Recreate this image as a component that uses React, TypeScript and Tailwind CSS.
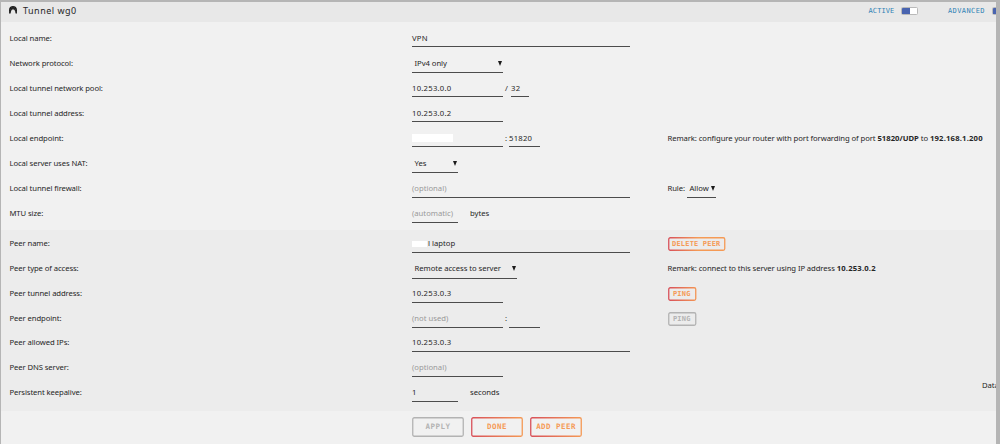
import type { ReactNode } from 'react'
import clsx from 'clsx'

function Row({ label, children, extra, peer }: { label: string; children: ReactNode; extra?: ReactNode; peer?: boolean }) {
  return (
    <div className={clsx('grid grid-cols-[402.5px_255.5px_1fr] pl-[8.5px] whitespace-nowrap', peer ? 'h-[24.85px]' : 'h-[25.1px]')}>
      <div className="pt-(--pad) tracking-[-0.1px]">{label}</div>
      <div className="flex">{children}</div>
      <div className="flex pt-(--pad) tracking-[-0.09px]">{extra}</div>
    </div>
  )
}

function Field({ className, hint, children }: { className: string; hint?: boolean; children?: ReactNode }) {
  return (
    <div className={clsx('flex h-[25px] shrink-0 border-b border-[#4c4c4c] pt-(--pad)', hint ? 'text-[#999]' : 'tracking-[0.25px]', className)}>
      {children}
    </div>
  )
}

function Select({ className, children }: { className: string; children: ReactNode }) {
  return (
    <div className={clsx('flex h-[25.6px] shrink-0 justify-between border-b border-[#4c4c4c] pt-(--pad) pl-[2.5px] tracking-[-0.05px]', className)}>
      <span>{children}</span>
      <svg className="mt-[3px] mr-px h-[5px] w-[4px]" viewBox="0 0 4 5">
        <path d="M0 0h4L2 5z" fill="#1c1b1b" />
      </svg>
    </div>
  )
}

function Button({ id, className, disabled, large, children }: { id: string; className: string; disabled?: boolean; large?: boolean; children: ReactNode }) {
  return (
    <button className={clsx("relative shrink-0 font-['DejaVu_Sans_Mono',monospace] font-bold", disabled ? 'text-[#b3b3b3]' : 'text-[#f59a55]', large ? 'h-[20px] text-[7.5px] tracking-[0.45px]' : 'h-[14px] text-[7px] tracking-[0.2px]', className)}>
      <svg className="absolute inset-0 h-full w-full overflow-visible">
        <defs>
          <linearGradient id={id} gradientUnits="userSpaceOnUse" x1="0" y1="0" x2={large ? 52 : 30} y2="0">
            <stop stopColor={disabled ? '#b3b3b3' : '#d8505a'} />
            <stop offset="1" stopColor={disabled ? '#b3b3b3' : '#f59a55'} />
          </linearGradient>
        </defs>
        <rect x="0.75" y="0.75" rx="1.5" style={{ width: 'calc(100% - 1.5px)', height: 'calc(100% - 1.5px)' }} fill="none" stroke={`url(#${id})`} strokeWidth="1.3" />
      </svg>
      <span className={clsx('relative block text-center', large ? 'leading-[20px]' : 'leading-[14px]')}>{children}</span>
    </button>
  )
}

function Toggle() {
  return (
    <span className="flex h-[8px] w-[17px] shrink-0 overflow-hidden rounded-[1.5px] border border-[#b9b9b9] bg-white">
      <span className="-my-px -ml-px w-[9px] shrink-0 bg-[#4964b0]" />
    </span>
  )
}

export default function App() {
  return (
    <div className="h-[444px] w-[1000px] overflow-hidden border-t-2 border-r-4 border-l border-[#b5b5b5] bg-[#f1f1f1] font-['Noto_Sans',sans-serif] text-[7.7px] leading-[11px] text-[#262626]">
      <header className="flex h-[20px] items-center overflow-hidden bg-[#e8e8e8] pl-[8px] whitespace-nowrap">
        <svg className="mt-[-4px] h-[8px] w-[8px]" viewBox="0 0 8 8">
          <path d="M0 7.5V4C0 1.5 1.7 0 4 0s4 1.5 4 4v3.5H6.6L6 4.8 5 3.6H3L2.2 4.8 1.6 7.5z" fill="#1e1e1e" />
          <path d="M0 6h1.8M.5 3l2 1.2M2.5.7l.8 2M5.5.7l-.8 2M7.5 3l-2 1.2M8 6H6.2" stroke="#777" strokeWidth=".3" />
        </svg>
        <h1 className="-mt-[2px] ml-[6px] text-[9px] leading-[12px] tracking-[0.5px]">Tunnel wg0</h1>
        <div className="-mt-[2px] ml-auto flex shrink-0 items-center font-['DejaVu_Sans_Mono',monospace] text-[7px] text-[#3284b6]">
          <span className="mr-[6.5px] tracking-[0.1px]">ACTIVE</span>
          <Toggle />
          <span className="mr-[7px] ml-[30px] tracking-[0.42px]">ADVANCED</span>
          <div className="w-[4px] overflow-hidden"><Toggle /></div>
        </div>
      </header>

      <section className="h-[208px] [--pad:10.5px]">
        <Row label="Local name:">
          <Field className="w-[217.5px]">VPN</Field>
        </Row>
        <Row label="Network protocol:">
          <Select className="w-[91px]">IPv4 only</Select>
        </Row>
        <Row label="Local tunnel network pool:">
          <Field className="w-[91px]">10.253.0.0</Field>
          <span className="w-[8px] pt-(--pad) pl-[2px]">/</span>
          <Field className="w-[18px]">32</Field>
        </Row>
        <Row label="Local tunnel address:">
          <Field className="w-[91px]">10.253.0.2</Field>
        </Row>
        <Row
          label="Local endpoint:"
          extra={<p>Remark: configure your router with port forwarding of port <b className="tracking-normal">51820/UDP</b> to <b className="tracking-[0.18px]">192.168.1.200</b></p>}
        >
          <Field className="w-[91px]"><span className="mt-px h-[8px] w-[41px] bg-white" /></Field>
          <span className="w-[6px] pt-(--pad) pl-[2px]">:</span>
          <Field className="w-[31px]">51820</Field>
        </Row>
        <Row label="Local server uses NAT:">
          <Select className="w-[46px]">Yes</Select>
        </Row>
        <Row
          label="Local tunnel firewall:"
          extra={<><span className="w-[19.5px]">Rule:</span><div className="-mt-(--pad)"><Select className="w-[28.5px]">Allow</Select></div></>}
        >
          <Field className="w-[217.5px]" hint>(optional)</Field>
        </Row>
        <Row label="MTU size:">
          <Field className="w-[46px]" hint>(automatic)</Field>
          <span className="pt-(--pad) pl-[12px]">bytes</span>
        </Row>
      </section>

      <section className="flow-root h-[180.5px] bg-[#ececec] [--pad:10px]">
        <div className="-mt-[1.9px]">
          <Row peer label="Peer name:" extra={<Button id="del" className="-mt-px w-[57.5px]">DELETE PEER</Button>}>
            <Field className="w-[217.5px]">
              <span className="mt-[3px] mr-px h-[6px] w-[15px] bg-white" /><span className="tracking-normal">l laptop</span>
            </Field>
          </Row>
          <Row peer label="Peer type of access:" extra={<p>Remark: connect to this server using IP address <b className="tracking-[0.18px]">10.253.0.2</b></p>}>
            <Select className="w-[105px]">Remote access to server</Select>
          </Row>
          <Row peer label="Peer tunnel address:" extra={<Button id="ping1" className="-mt-px w-[28.5px]">PING</Button>}>
            <Field className="w-[91px]">10.253.0.3</Field>
          </Row>
          <Row peer label="Peer endpoint:" extra={<Button id="ping2" disabled className="-mt-px w-[28.5px]">PING</Button>}>
            <Field className="w-[91px]" hint>(not used)</Field>
            <span className="w-[6px] pt-(--pad) pl-[2px]">:</span>
            <Field className="w-[31px]" />
          </Row>
          <Row peer label="Peer allowed IPs:">
            <Field className="w-[217.5px]">10.253.0.3</Field>
          </Row>
          <Row peer label="Peer DNS server:">
            <Field className="w-[91px]" hint>(optional)</Field>
          </Row>
          <Row peer label="Persistent keepalive:" extra={<span className="-mt-[7px] ml-[314.5px]">Data</span>}>
            <Field className="w-[46px]">1</Field>
            <span className="pt-(--pad) pl-[12px]">seconds</span>
          </Row>
        </div>
      </section>

      <footer className="flex gap-[7px] pt-[6.5px] pl-[411px]">
        <Button id="apply" large disabled className="w-[52px]">APPLY</Button>
        <Button id="done" large className="w-[52px]">DONE</Button>
        <Button id="add" large className="w-[52px]">ADD PEER</Button>
      </footer>
    </div>
  )
}
